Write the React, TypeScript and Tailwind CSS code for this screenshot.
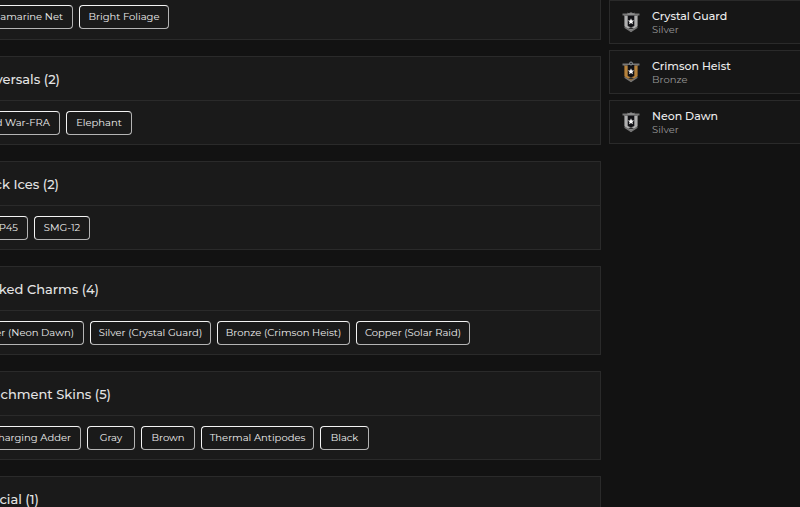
type Chip = { label: string; width: string };
type Group = { title: string; titleWidth: string; chips: Chip[] };

const groups: Group[] = [
  {
    title: 'versals (2)',
    titleWidth: 'w-[60px]',
    chips: [
      { label: 'd War-FRA', width: 'w-[60px]' },
      { label: 'Elephant', width: 'w-[66px]' },
    ],
  },
  {
    title: 'ck Ices (2)',
    titleWidth: 'w-[59px]',
    chips: [
      { label: 'P45', width: 'w-[28px]' },
      { label: 'SMG-12', width: 'w-[56px]' },
    ],
  },
  {
    title: 'ked Charms (4)',
    titleWidth: 'w-[99px]',
    chips: [
      { label: 'er (Neon Dawn)', width: 'w-[84px]' },
      { label: 'Silver (Crystal Guard)', width: 'w-[121px]' },
      { label: 'Bronze (Crimson Heist)', width: 'w-[133px]' },
      { label: 'Copper (Solar Raid)', width: 'w-[114px]' },
    ],
  },
  {
    title: 'achment Skins (5)',
    titleWidth: 'w-[111px]',
    chips: [
      { label: 'harging Adder', width: 'w-[81px]' },
      { label: 'Gray', width: 'w-[48px]' },
      { label: 'Brown', width: 'w-[54px]' },
      { label: 'Thermal Antipodes', width: 'w-[113px]' },
      { label: 'Black', width: 'w-[49px]' },
    ],
  },
];

const seasons = [
  { name: 'Crystal Guard', rank: 'Silver' },
  { name: 'Crimson Heist', rank: 'Bronze' },
  { name: 'Neon Dawn', rank: 'Silver' },
];

const weaponSkins: Chip[] = [
  { label: 'uamarine Net', width: 'w-[73px]' },
  { label: 'Bright Foliage', width: 'w-[90px]' },
];

function Chips({ chips }: { chips: Chip[] }) {
  return (
    <ul className="flex gap-[6px]">
      {chips.map((chip, i) => (
        <li
          key={chip.label}
          className={`flex h-6 shrink-0 items-center border border-[#b4b4b4] border-t-[#f4f4f4] text-[10px] leading-4 whitespace-nowrap text-[#eeeeee] ${chip.width} ${
            i === 0 ? 'justify-end rounded-r border-l-0 pr-[9px]' : 'justify-center rounded border-l-[#f4f4f4]'
          }`}
        >
          {chip.label}
        </li>
      ))}
    </ul>
  );
}

function Title({ children, width }: { children: string; width: string }) {
  return (
    <h2
      className={`flex h-[43px] items-center justify-end text-[13px] leading-5 font-medium whitespace-nowrap text-[#e4e4e4] ${width}`}
    >
      {children}
    </h2>
  );
}

function Badge({ rank }: { rank: string }) {
  const bronze = rank === 'Bronze';
  const main = bronze ? '#b5823c' : '#b0b0b0';
  const dark = bronze ? '#7a5628' : '#707070';
  return (
    <svg viewBox="0 0 20 22" className="h-[22px] w-5 shrink-0" aria-hidden="true">
      <path d="M3 3h14v12l-7 6-7-6z" fill={dark} />
      <path d="M1.500 2.500H18.500V4.500h-17z" fill="#777" />
      <path d="M4 5h3v10l3 1.500 3-1.500V5h3v10.500l-6 4-6-4z" fill={main} />
      <path d="M6.700 4h6.600v11L10 16.200 6.700 15z" fill="#101014" />
      <path d="M3.500 15.500l6.500 4 6.500-4V17L10 21.200 3.500 17z" fill="#747474" />
      <path d="M7 17.200l3 1.300 3-1.300-3-1z" fill="#303030" />
      {bronze ? (
        <circle cx="10" cy="2.500" r="1.500" fill="#35383b" stroke="#8e9498" strokeWidth="1" />
      ) : (
        <path d="M6.500 1.500l1.500 1 1-1h2l1 1 1.500-1v3h-7z" fill="#8b8b8b" />
      )}
      <path d="M10 7.300l.9 2.100 2.200.2-1.700 1.500.5 2.200-1.900-1.200-1.900 1.200.5-2.200-1.700-1.500 2.200-.2z" fill="#fff" />
    </svg>
  );
}

export default function App() {
  return (
    <div className="flex h-screen gap-2 overflow-hidden bg-[#121212] font-['Montserrat','Inter',sans-serif]">
      <main className="flex min-w-0 flex-1 flex-col gap-4">
        <section className="border-r border-b border-[#2a2a2a] bg-[#1a1a1a] pt-[5px] pb-[10px]">
          <Chips chips={weaponSkins} />
        </section>
        {groups.map((group) => (
          <section key={group.title} className="border-y border-r border-[#2a2a2a] bg-[#1a1a1a]">
            <div className="border-b border-[#2a2a2a]">
              <Title width={group.titleWidth}>{group.title}</Title>
            </div>
            <div className="pt-[10px] pb-[9px]">
              <Chips chips={group.chips} />
            </div>
          </section>
        ))}
        <section className="border-t border-r border-[#2a2a2a] bg-[#1a1a1a]">
          <Title width="w-[39px]">cial (1)</Title>
        </section>
      </main>
      <aside className="w-[191px] shrink-0">
        <ul className="flex flex-col gap-[6px]">
          {seasons.map((season) => (
            <li
              key={season.name}
              className="flex h-11 items-center gap-[11px] border-y border-l border-[#2a2a2a] bg-[#161616] pl-[11px]"
            >
              <Badge rank={season.rank} />
              <div>
                <p className="text-[11px] leading-[14px] font-medium text-[#ededed]">{season.name}</p>
                <p className="text-[10px] leading-[13px] text-[#999999]">{season.rank}</p>
              </div>
            </li>
          ))}
        </ul>
      </aside>
    </div>
  );
}
